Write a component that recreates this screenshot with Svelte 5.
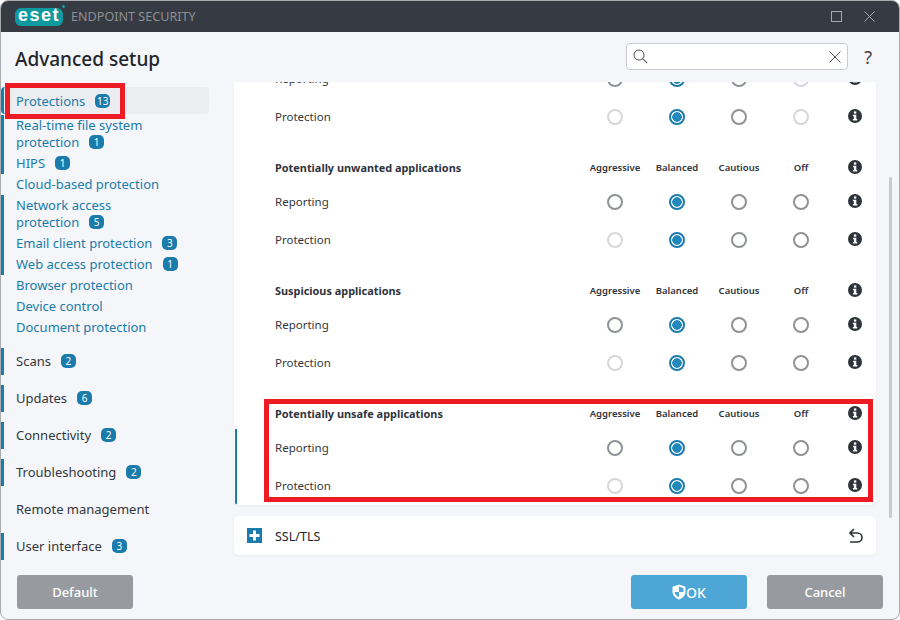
<script>
  const nav = [
    { label: 'Protections', badge: 13, kind: 'link active', bar: true },
    { label: 'Real-time file system protection', badge: 1, kind: 'link wrap', bar: true },
    { label: 'HIPS', badge: 1, kind: 'link', bar: true },
    { label: 'Cloud-based protection', kind: 'link' },
    { label: 'Network access protection', badge: 5, kind: 'link wrap', bar: true },
    { label: 'Email client protection', badge: 3, kind: 'link', bar: true },
    { label: 'Web access protection', badge: 1, kind: 'link', bar: true },
    { label: 'Browser protection', kind: 'link' },
    { label: 'Device control', kind: 'link' },
    { label: 'Document protection', kind: 'link' },
    { label: 'Scans', badge: 2, kind: 'top', bar: true },
    { label: 'Updates', badge: 6, kind: 'top', bar: true },
    { label: 'Connectivity', badge: 2, kind: 'top', bar: true },
    { label: 'Troubleshooting', badge: 2, kind: 'top', bar: true },
    { label: 'Remote management', kind: 'top' },
    { label: 'User interface', badge: 3, kind: 'top', bar: true }
  ];

  const levels = ['Aggressive', 'Balanced', 'Cautious', 'Off'];

  const sections = [
    {
      rows: [
        { label: 'Reporting', states: ['', 'on', '', 'dim'] },
        { label: 'Protection', states: ['dim', 'on', '', 'dim'] }
      ]
    },
    {
      title: 'Potentially unwanted applications',
      rows: [
        { label: 'Reporting', states: ['', 'on', '', ''] },
        { label: 'Protection', states: ['dim', 'on', '', ''] }
      ]
    },
    {
      title: 'Suspicious applications',
      rows: [
        { label: 'Reporting', states: ['', 'on', '', ''] },
        { label: 'Protection', states: ['dim', 'on', '', ''] }
      ]
    },
    {
      title: 'Potentially unsafe applications',
      rows: [
        { label: 'Reporting', states: ['', 'on', '', ''] },
        { label: 'Protection', states: ['dim', 'on', '', ''] }
      ]
    }
  ];
</script>

{#snippet info()}
  <svg class="info" viewBox="0 0 14 14" aria-hidden="true">
    <circle cx="7" cy="7" r="7" fill="#2f333b" />
    <rect x="5.9" y="2.4" width="2.4" height="2.2" fill="#fff" />
    <path d="M4.9 5.8h3.4v4.2h1v1.5H4.9V10h1V7.3h-1z" fill="#fff" />
  </svg>
{/snippet}

<div class="window">
  <div class="titlebar">
    <div class="logo"><span class="logo-text">eset</span></div>
    <span class="product">ENDPOINT SECURITY</span>
    <svg class="win-btn max" viewBox="0 0 11 11"><rect x="0.5" y="0.5" width="10" height="10" fill="none" stroke="#a3a6ab" /></svg>
    <svg class="win-btn close" viewBox="0 0 11 11"><path d="M0.5 0.5l10 10M10.5 0.5l-10 10" fill="none" stroke="#a3a6ab" /></svg>
  </div>

  <div class="header">
    <h1>Advanced setup</h1>
    <div class="search">
      <svg class="search-icon" viewBox="0 0 15 15"><circle cx="6" cy="6" r="5" fill="none" stroke="#555" /><path d="M9.6 9.6l4.6 4.6" stroke="#555" stroke-width="1.1" /></svg>
      <svg class="search-clear" viewBox="0 0 12 12"><path d="M0.5 0.5l11 11M11.5 0.5l-11 11" stroke="#555" fill="none" /></svg>
    </div>
    <span class="help">?</span>
  </div>

  <div class="main">
    <nav class="sidebar">
      {#each nav as item}
        <div class="item {item.kind}" class:bar={item.bar}>
          <span class="label">{item.label}{#if item.badge}<span class="badge">{item.badge}</span>{/if}</span>
        </div>
      {/each}
    </nav>

    <div class="pane">
      <div class="card settings">
        <div class="scrolled">
          {#each sections as section}
            <section>
              {#if section.title}
                <div class="grid head">
                  <strong>{section.title}</strong>
                  {#each levels as level}<span class="level">{level}</span>{/each}
                  {@render info()}
                </div>
              {/if}
              {#each section.rows as row}
                <div class="grid row">
                  <span class="row-label">{row.label}</span>
                  {#each row.states as s}<span class="radio {s}"></span>{/each}
                  {@render info()}
                </div>
              {/each}
            </section>
          {/each}
        </div>
        <span class="changed"></span>
      </div>

      <div class="card ssl">
        <svg class="plus" viewBox="0 0 15 15"><rect width="15" height="15" fill="#1b7bab" /><path d="M6 2.500h3v3.500h3.500v3H9v3.500H6V9H2.500V6H6z" fill="#fff" /></svg>
        <span class="ssl-label">SSL/TLS</span>
        <svg class="undo" viewBox="0 0 14 15"><path d="M5 1L1 5l4 4M1 5h7.500a4.500 4.500 0 0 1 0 9H1" fill="none" stroke="#2f333b" stroke-width="1.600" /></svg>
      </div>
    </div>
  </div>

  <div class="footer">
    <button class="gray">Default</button>
    <span class="spacer"></span>
    <button class="ok">
      <svg viewBox="0 0 14 16"><path d="M7 0.500L13.500 2.800V7.500C13.500 11.500 10.500 14.300 7 15.500 3.500 14.300 0.500 11.500 0.500 7.500V2.800z" fill="#fff" /><path d="M7 2.500V8H2.500c.4 2.600 2.400 4.300 4.500 5.200V8h4.500V4.200z" fill="#4da6d5" /></svg>OK
    </button>
    <button class="gray">Cancel</button>
  </div>

  <span class="scrollthumb"></span>
  <span class="mark mark-nav"></span>
  <span class="mark mark-unsafe"></span>
</div>

<style>
  :global(body) {
    margin: 0;
    background: #fff;
    font-family: "Noto Sans", sans-serif;
  }

  .window {
    position: relative;
    box-sizing: border-box;
    width: 900px;
    height: 620px;
    display: flex;
    flex-direction: column;
    background: #f4f6f9;
    border: 1px solid #a9abae;
    border-radius: 8px;
    overflow: hidden;
  }

  .titlebar {
    height: 31px;
    flex: none;
    display: flex;
    align-items: center;
    background: #363a42;
    padding: 0 24px 0 14px;
  }

  .logo {
    position: relative;
    width: 48px;
    height: 18px;
    background: #0e9a9e;
    border-radius: 6px;
    display: flex;
    align-items: center;
    justify-content: center;
  }

  .logo::after {
    content: "";
    position: absolute;
    right: -2px;
    top: -3px;
    width: 3px;
    height: 3px;
    border-radius: 50%;
    background: #0e9a9e;
  }

  .logo-text {
    font-family: "Liberation Sans", sans-serif;
    font-weight: 700;
    font-size: 18px;
    line-height: 16px;
    letter-spacing: 1.500px;
    color: #fff;
    margin-top: -4px;
  }

  .product {
    margin-left: 8px;
    font-size: 12.600px;
    color: #8d9095;
    flex: 1;
  }

  .win-btn {
    width: 11px;
    height: 11px;
  }

  .close {
    margin-left: 22px;
  }

  .header {
    height: 50px;
    flex: none;
    display: flex;
    align-items: center;
    padding: 0 27px 0 14px;
  }

  h1 {
    margin: 4px 0 0;
    flex: 1;
    font-size: 19px;
    font-weight: 500;
    color: #22252b;
  }

  .search {
    box-sizing: border-box;
    width: 222px;
    height: 27px;
    margin-top: -1px;
    background: #fff;
    border: 1px solid #c9cbce;
    border-radius: 4px;
    display: flex;
    align-items: center;
    justify-content: space-between;
    padding: 0 6px;
  }

  .search-icon {
    width: 15px;
    height: 15px;
  }

  .search-clear {
    width: 12px;
    height: 12px;
  }

  .help {
    margin-left: 16px;
    font-size: 18px;
    color: #444;
  }

  .main {
    flex: 1;
    min-height: 0;
    display: flex;
  }

  .sidebar {
    width: 233px;
    flex: none;
    padding-top: 5px;
  }

  .item {
    box-sizing: border-box;
    width: 208px;
    font-size: 13px;
    line-height: 17px;
    padding: 2px 10px 2px 12px;
    border-left: 3px solid transparent;
    color: #1b7bab;
  }

  .item.bar {
    border-left-color: #1b7bab;
  }

  .item.active {
    height: 27px;
    padding-top: 6px;
    margin-bottom: 1px;
    background: #ecedf0;
    border-radius: 4px;
  }

  .item.top {
    height: 27px;
    padding-top: 5px;
    color: #33373d;
    margin-top: 10px;
  }

  .item.wrap .label {
    display: block;
    width: 150px;
  }

  .badge {
    display: inline-block;
    width: 15px;
    height: 14px;
    margin-left: 10px;
    border-radius: 5px;
    background: #1b7bab;
    color: #fff;
    font-size: 10px;
    line-height: 14px;
    text-align: center;
    vertical-align: 1px;
  }

  .pane {
    width: 642px;
    flex: none;
    display: flex;
    flex-direction: column;
    gap: 11px;
  }

  .card {
    position: relative;
    background: #fff;
    border-radius: 0 0 5px 5px;
    box-shadow: 0 1px 3px rgba(0, 0, 0, 0.05);
  }

  .settings {
    height: 423px;
    flex: none;
    overflow: hidden;
  }

  .scrolled {
    margin-top: -22px;
  }

  section + section {
    margin-top: 17px;
  }

  .grid {
    display: grid;
    grid-template-columns: 309px repeat(4, 62px) 44px;
    align-items: center;
    padding-left: 41px;
    font-size: 11.500px;
    color: #33373d;
  }

  .head {
    height: 30px;
  }

  .row {
    height: 38px;
  }

  .row-label,
  strong {
    margin-top: -2px;
  }

  strong {
    font-size: 10.900px;
    font-weight: 700;
    color: #2f333b;
  }

  .level {
    justify-self: center;
    margin-top: -2px;
    font-size: 9.500px;
    font-weight: 600;
    color: #2f333b;
  }

  .radio {
    justify-self: center;
    box-sizing: border-box;
    width: 16px;
    height: 16px;
    border-radius: 50%;
    border: 2px solid #8f9296;
    background: #fff;
  }

  .radio.dim {
    border-color: #d6d7d9;
  }

  .radio.on {
    border-color: #1b7bab;
    background: radial-gradient(circle, #2389bd 0 4.500px, #fff 5px);
  }

  .info {
    width: 14px;
    height: 14px;
    margin: -2px 0 0 16px;
  }

  .changed {
    position: absolute;
    left: 1px;
    bottom: 0;
    width: 2px;
    height: 76px;
    background: #1b7bab;
  }

  .ssl {
    height: 39px;
    flex: none;
    border-radius: 5px;
    display: flex;
    align-items: center;
    padding: 0 13px;
    font-size: 12.500px;
    color: #22252b;
  }

  .plus {
    width: 15px;
    height: 15px;
  }

  .ssl-label {
    margin: 2px 0 0 13px;
    flex: 1;
  }

  .undo {
    width: 14px;
    height: 15px;
  }

  .footer {
    height: 44px;
    flex: none;
    display: flex;
    align-items: flex-start;
    gap: 20px;
    padding: 0 16px;
  }

  .spacer {
    flex: 1;
  }

  button {
    width: 116px;
    height: 34px;
    border: none;
    border-radius: 3px;
    color: #fff;
    font: 500 13px "Noto Sans", sans-serif;
    display: flex;
    align-items: center;
    justify-content: center;
  }

  .gray {
    background: #979ba0;
  }

  .ok {
    background: #4da6d5;
    font-size: 14px;
  }

  .ok svg {
    width: 14px;
    height: 16px;
  }

  .scrollthumb {
    position: absolute;
    left: 888px;
    top: 176px;
    width: 3px;
    height: 341px;
    border-radius: 2px;
    background: #c9cbce;
  }

  .mark {
    position: absolute;
    box-sizing: border-box;
    border: 5px solid #ed1c24;
  }

  .mark-nav {
    left: 4px;
    top: 82px;
    width: 120px;
    height: 36px;
  }

  .mark-unsafe {
    left: 263px;
    top: 398px;
    width: 609px;
    height: 103px;
  }
</style>
